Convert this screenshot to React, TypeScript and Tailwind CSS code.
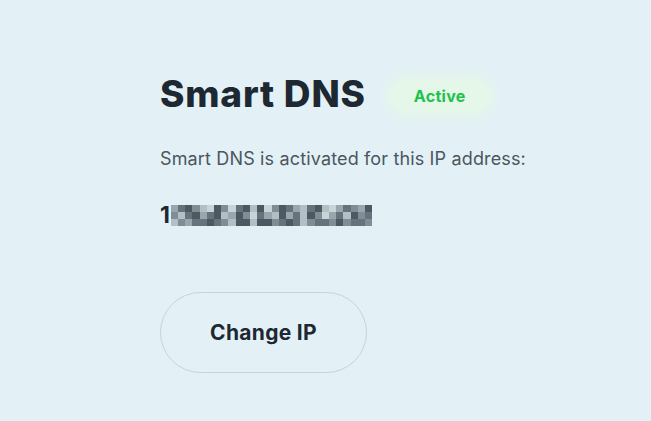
const PIXELS: number[][] = [
  [3, 5, 6, 4, 2, 1, 6, 4, 1, 5, 6, 2, 6, 1, 4, 6, 5, 3, 2, 5, 6, 2, 1, 3, 5, 4, 3, 6],
  [4, 2, 5, 6, 3, 5, 6, 2, 3, 6, 4, 1, 5, 3, 2, 6, 3, 5, 2, 6, 4, 1, 3, 5, 2, 6, 4, 5],
  [2, 4, 3, 5, 5, 6, 5, 4, 2, 6, 6, 2, 6, 6, 4, 5, 6, 5, 2, 4, 5, 5, 4, 6, 4, 5, 5, 4],
];

const SHADES = [
  "bg-[#e3f1f6]",
  "bg-[#c9d4d9]",
  "bg-[#b3bfc5]",
  "bg-[#9aa6ad]",
  "bg-[#808d95]",
  "bg-[#66737c]",
  "bg-[#4c5862]",
];

function PixelatedAddress() {
  return (
    <div className="flex flex-col">
      {PIXELS.map((row, r) => (
        <div key={r} className="flex">
          {row.map((v, c) => (
            <div key={c} className={`h-[7px] w-[7.2px] ${SHADES[v]}`} />
          ))}
        </div>
      ))}
    </div>
  );
}

export default function App() {
  return (
    <div className="h-[421px] w-[651px] overflow-hidden bg-[#e3f1f6] pl-[160px] pt-[72px] font-['Inter',sans-serif]">
      <div className="flex items-center gap-[23px]">
        <h1 className="text-[37px] font-extrabold leading-[44px] tracking-[0.8px] text-[#1d2832]">
          Smart DNS
        </h1>
        <span className="mt-[4px] flex h-[34px] w-[102px] items-center justify-center rounded-full bg-[#e4f7e8] text-[16px] font-bold tracking-[0.3px] text-[#20c24c] shadow-[0_0_8px_4px_#e4f6ea]">
          Active
        </span>
      </div>

      <p className="mt-[31px] text-[18px] leading-[24px] tracking-[0.15px] text-[#4b5660]">
        Smart DNS is activated for this IP address:
      </p>

      <div className="mt-[30px] flex h-[28px] items-center gap-[1px]">
        <span className="text-[23px] font-bold leading-[28px] text-[#1d2832]">1</span>
        <PixelatedAddress />
      </div>

      <button className="mt-[63px] flex h-[81px] w-[207px] items-center justify-center rounded-full border border-[#c6d3d8] text-[21px] font-bold tracking-[0.3px] text-[#1d2832]">
        Change IP
      </button>
    </div>
  );
}
